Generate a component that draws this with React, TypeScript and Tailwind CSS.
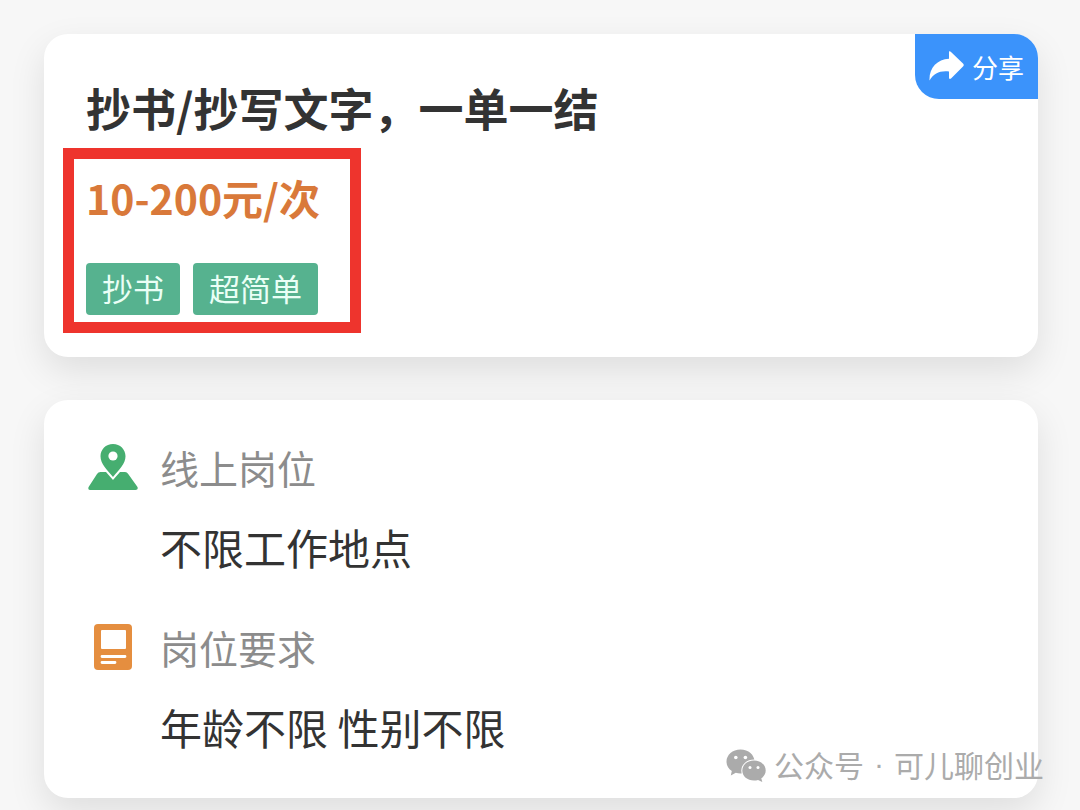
import type { ReactNode } from 'react';

interface InfoItem {
  key: string;
  label: string;
  value: string;
  icon: ReactNode;
}

// 分享箭头
function ShareIcon() {
  return (
    <svg className="h-[31px] w-[36px] shrink-0" viewBox="0 0 36 31" fill="currentColor" aria-hidden="true">
      <path d="M21 0.500 Q22 0 23 1 L35 12.500 Q36.500 14 35 15.500 L23 27.500 Q21.500 28.500 21 27 V20.500 C12 19.500 6 22 1.500 29.500 C1 17 9 8.500 21 7.800 Z" />
    </svg>
  );
}

// 地点图标
function LocationIcon() {
  return (
    <svg className="h-[46px] w-[50px]" viewBox="0 0 50 46" fill="none" aria-hidden="true">
      <path
        d="M12.500 28 H37 Q39 28 40.200 30 L49.500 43 Q50.500 46 47.500 46 H2.500 Q-0.500 46 0.600 43 L9 30 Q10.200 28 12.500 28 Z"
        fill="#46ae70"
      />
      <path
        d="M25 0 C32.200 0 37.500 5.500 37.500 12.300 C37.500 20 31 26 25 33 C19 26 12.500 20 12.500 12.300 C12.500 5.500 17.800 0 25 0 Z"
        fill="#46ae70"
        stroke="#fff"
        strokeWidth="4"
        paintOrder="stroke"
      />
      <circle cx="25" cy="12" r="4.600" fill="#fff" />
    </svg>
  );
}

// 要求图标
function RequirementIcon() {
  return (
    <svg className="h-[46px] w-[38px]" viewBox="0 0 38 46" fill="none" aria-hidden="true">
      <rect width="38" height="46" rx="4" fill="#e58e3f" />
      <rect x="7" y="6" width="25" height="19" rx="1" fill="#fff" />
      <path d="M8 32.500 H31 M8 38.500 H21" stroke="#fff" strokeWidth="2.800" strokeLinecap="round" />
    </svg>
  );
}

// 微信气泡
function WechatIcon() {
  return (
    <svg className="h-[34px] w-[40px]" viewBox="0 0 40 34" aria-hidden="true">
      <path
        d="M14.500 0.500 C22.500 0.500 28.500 6 28.500 12.500 C28.500 19.500 22.500 24.500 14.500 24.500 C12.800 24.500 11.200 24.200 9.800 23.800 L4.800 26.500 L5.800 22 C2.300 19.800 0.500 16.400 0.500 12.500 C0.500 6 6.500 0.500 14.500 0.500 Z"
        fill="#ababab"
      />
      <circle cx="9.800" cy="8.500" r="1.800" fill="#fff" />
      <circle cx="19.400" cy="8.500" r="1.800" fill="#fff" />
      <path
        d="M28 11.500 C34.800 11.500 39.700 16 39.700 21.500 C39.700 24.800 38 27.500 35.300 29.300 L36.300 33 L32 30.900 C30.800 31.300 29.400 31.500 28 31.500 C21.300 31.500 16.300 27.200 16.300 21.500 C16.300 16 21.300 11.500 28 11.500 Z"
        fill="#ababab"
        stroke="#fff"
        strokeWidth="2"
        paintOrder="stroke"
      />
      <circle cx="24" cy="18.500" r="1.500" fill="#fff" />
      <circle cx="32" cy="18.500" r="1.500" fill="#fff" />
    </svg>
  );
}

const tags = ['抄书', '超简单'];

const infoItems: InfoItem[] = [
  { key: 'location', label: '线上岗位', value: '不限工作地点', icon: <LocationIcon /> },
  { key: 'requirement', label: '岗位要求', value: '年龄不限 性别不限', icon: <RequirementIcon /> },
];

export default function App() {
  return (
    <main
      lang="zh-CN"
      className="relative min-h-screen bg-[#f7f7f7] pt-[34px] pr-[42px] pb-3 pl-[44px] font-['Noto_Sans_CJK_SC',sans-serif] text-[#333]"
    >
      {/* 职位概要 */}
      <section className="relative rounded-3xl bg-white pt-[44px] pb-6 shadow-[0_14px_36px_rgba(0,0,0,0.1)]">
        <button
          type="button"
          className="absolute top-0 right-0 flex h-[65px] items-center gap-2 rounded-tr-3xl rounded-bl-3xl bg-[#3b93fb] pr-3.5 pl-[13px] text-[26px] text-white"
        >
          <ShareIcon />
          分享
        </button>

        <h1 className="pl-[42px] text-[45px] leading-[60px] font-bold">抄书/抄写文字，一单一结</h1>

        {/* 红框重点 */}
        <div className="mt-2.5 ml-[19px] w-fit border-[11px] border-[#ee342d] pt-2 pr-[30px] pb-[7px] pl-3">
          <p className="text-[41px] leading-[60px] font-bold text-[#d9793a]">10-200元/次</p>
          <ul className="mt-9 flex gap-[13px]">
            {tags.map((tag) => (
              <li key={tag} className="rounded bg-[#56b28f] px-4 pb-0.5 text-[31px] leading-[50px] text-[#eafff6]">
                {tag}
              </li>
            ))}
          </ul>
        </div>
      </section>

      {/* 岗位信息 */}
      <section className="relative mt-[43px] rounded-3xl bg-white px-[44px] pt-[37px] pb-[41px] shadow-[0_14px_36px_rgba(0,0,0,0.1)]">
        <dl className="flex flex-col gap-10">
          {infoItems.map((item) => (
            <div key={item.key} className="grid grid-cols-[50px_1fr] gap-x-[22px] gap-y-5">
              <dt className="col-span-2 grid grid-cols-subgrid items-center text-[39px] leading-[60px] text-[#8c8c8c]">
                <span className="flex justify-center">{item.icon}</span>
                {item.label}
              </dt>
              <dd className="col-start-2 text-[42px] leading-[60px]">{item.value}</dd>
            </div>
          ))}
        </dl>
      </section>

      {/* 公众号水印 */}
      <div className="absolute right-9 bottom-[26px] flex items-center gap-2 text-[30px] leading-8 text-[#ababab]">
        <WechatIcon />
        <span className="flex gap-2.5 pb-1">
          <span>公众号</span>
          <span className="font-['Liberation_Sans',sans-serif]">·</span>
          <span>可儿聊创业</span>
        </span>
      </div>
    </main>
  );
}
